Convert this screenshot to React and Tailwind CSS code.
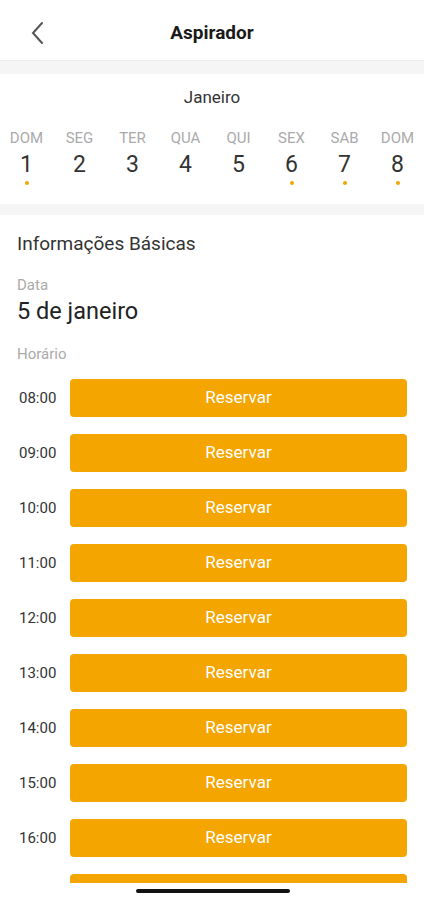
import React from "react";

const days = [
  { label: "DOM", n: 1, dot: true },
  { label: "SEG", n: 2, dot: false },
  { label: "TER", n: 3, dot: false },
  { label: "QUA", n: 4, dot: false },
  { label: "QUI", n: 5, dot: false },
  { label: "SEX", n: 6, dot: true },
  { label: "SAB", n: 7, dot: true },
  { label: "DOM", n: 8, dot: true },
];

const hours = ["08:00", "09:00", "10:00", "11:00", "12:00", "13:00", "14:00", "15:00", "16:00", "17:00"];

const App = () => {
  return (
    <div className="w-[424px] h-[900px] bg-white flex flex-col overflow-hidden font-['Roboto',sans-serif] text-[#222]">
      <div className="h-[60px] shrink-0 flex items-center pt-[6px] relative">
        <button className="absolute left-[28px] top-[21px] text-[#555]">
          <svg width="20" height="24" viewBox="0 0 20 24" fill="none" stroke="currentColor" strokeWidth="2" strokeLinecap="round">
            <path d="M14 2 L5 12 L14 22" />
          </svg>
        </button>
        <h1 className="w-full text-center text-[19px] font-bold text-[#1a1a1a] leading-[24px]">Aspirador</h1>
      </div>
      <div className="h-[14px] shrink-0 bg-[#f5f5f5] border-t border-[#ececec]"></div>
      <div className="shrink-0 pt-[12px] pb-[19px]">
        <p className="text-center text-[17px] text-[#333] leading-[22px]">Janeiro</p>
        <div className="grid grid-cols-8 mt-[21px]">
          {days.map((d, i) => (
            <div key={i} className="flex flex-col items-center">
              <span className="text-[15px] text-[#aaa] leading-[18px]">{d.label}</span>
              <span className="text-[23px] text-[#333] leading-[26px] mt-[5px]">{d.n}</span>
              <span className={`w-[4px] h-[4px] rounded-full mt-[3px] ${d.dot ? "bg-[#f5a500]" : "bg-transparent"}`}></span>
            </div>
          ))}
        </div>
      </div>
      <div className="h-[11px] shrink-0 bg-[#f5f5f5]"></div>
      <div className="flex-1 overflow-hidden px-[17px] pt-[17px] relative">
        <h2 className="text-[19px] text-[#333] leading-[24px]">Informações Básicas</h2>
        <p className="text-[15px] text-[#aaa] mt-[20px] leading-[18px]">Data</p>
        <p className="text-[23.5px] text-[#222] leading-[30px] mt-[2px]">5 de janeiro</p>
        <p className="text-[15px] text-[#aaa] mt-[19px] leading-[18px]">Horário</p>
        <div className="flex flex-col gap-[17px] mt-[16px] h-[504px] overflow-hidden">
          {hours.map((h) => (
            <div key={h} className="flex items-center shrink-0">
              <span className="w-[53px] pl-[2px] text-[15px] text-[#333]">{h}</span>
              <button className="flex-1 h-[38px] rounded-[4px] bg-[#f5a500] text-white text-[17px]">Reservar</button>
            </div>
          ))}
        </div>
        <div className="absolute left-[136px] bottom-[7px] w-[154px] h-[4px] rounded-full bg-[#111]"></div>
      </div>
    </div>
  );
};

export default App;
